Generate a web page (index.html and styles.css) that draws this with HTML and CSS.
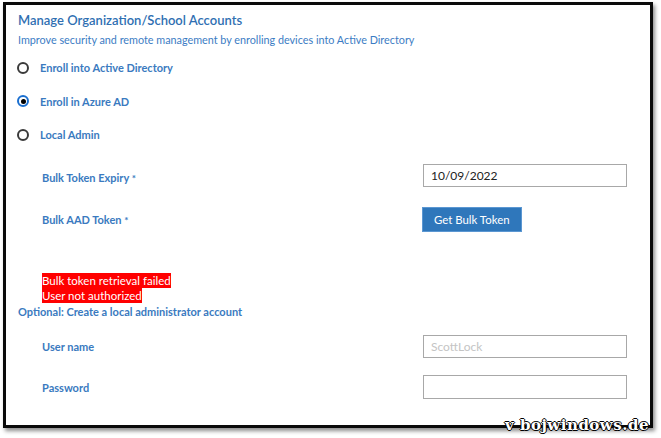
FILE: index.html
```html
<!DOCTYPE html>
<html>
<head>
<meta charset="utf-8">
<link rel="stylesheet" href="styles.css">
</head>
<body>
<div class="frame">
  <h1 class="title">Manage Organization/School Accounts</h1>
  <p class="subtitle">Improve security and remote management by enrolling devices into Active Directory</p>
  <div class="radios">
    <div class="radio-row"><span class="radio"></span><span class="radio-label">Enroll into Active Directory</span></div>
    <div class="radio-row"><span class="radio checked"></span><span class="radio-label">Enroll in Azure AD</span></div>
    <div class="radio-row"><span class="radio"></span><span class="radio-label">Local Admin</span></div>
  </div>
  <div class="field field-expiry">
    <span class="field-label">Bulk Token Expiry <span class="req">*</span></span>
    <div class="input"><span class="value">10/09/2022</span></div>
  </div>
  <div class="field field-token">
    <span class="field-label">Bulk AAD Token <span class="req">*</span></span>
    <div><button class="btn">Get Bulk Token</button></div>
  </div>
  <div class="errors">
    <span class="error">Bulk token retrieval failed</span>
    <span class="error">User not authorized</span>
  </div>
  <p class="optional">Optional: Create a local administrator account</p>
  <div class="field field-user">
    <span class="field-label">User name</span>
    <div class="input"><span class="placeholder">ScottLock</span></div>
  </div>
  <div class="field field-pass">
    <span class="field-label">Password</span>
    <div class="input"></div>
  </div>
</div>
<div class="watermark">v bojwindows.de</div>
</body>
</html>
```
FILE: styles.css
```css
html, body {
  margin: 0;
  padding: 0;
  background: #fff;
}
body {
  font-family: Lato, "Open Sans", sans-serif;
  color: #3b7cc0;
  position: relative;
  width: 661px;
  height: 438px;
  overflow: hidden;
}
.frame {
  margin: 2px 0 0 3px;
  height: 420px;
  width: 632px;
  border: 3px solid #0a0a0a;
  box-shadow: 2px 3px 4px rgba(0, 0, 0, 0.45);
  padding: 0 0 0 12px;
  box-sizing: content-box;
}
.title {
  margin: 5px 0 0 0;
  font-size: 13px;
  line-height: 20px;
  font-weight: 600;
  color: #2f6fb2;
}
.subtitle {
  margin: 2px 0 0 0;
  font-size: 10.8px;
  line-height: 16px;
  font-weight: 400;
  color: #3b7cc4;
}
.radios {
  margin-top: 3px;
}
.radio-row {
  height: 33.5px;
  display: flex;
  align-items: center;
}
.radio {
  width: 8px;
  height: 8px;
  border: 2px solid #3a3a3a;
  border-radius: 50%;
  margin-left: -1px;
  margin-right: 11px;
  display: flex;
  align-items: center;
  justify-content: center;
  flex: none;
}
.radio.checked {
  border-color: #1a6fd0;
}
.radio.checked::after {
  content: "";
  width: 5px;
  height: 5px;
  border-radius: 50%;
  background: #000;
}
.radio-label {
  font-size: 11px;
  font-weight: 700;
  color: #3a7ac0;
}
.field {
  display: grid;
  grid-template-columns: 381px 204px;
  align-items: center;
  padding-left: 24px;
}
.field-label {
  font-size: 11px;
  font-weight: 700;
  color: #3a7ac0;
}
.req {
  font-size: 10px;
}
.field-expiry {
  margin-top: 12.5px;
}
.field-expiry .field-label {
  position: relative;
  top: 2px;
}
.field-token {
  margin-top: 20px;
}
.input {
  height: 21px;
  border: 1px solid #a8a8a8;
  box-sizing: content-box;
  display: flex;
  align-items: center;
  padding-left: 7px;
  font-size: 12px;
  width: 195px;
}
.value {
  color: #222;
}
.placeholder {
  color: #c4c4c4;
}
.btn {
  height: 25px;
  padding: 0 11px;
  margin: 0 0 0 -1px;
  border: 1px solid #5b97d2;
  background: #2f77bb;
  color: #fff;
  font-family: Lato, "Open Sans", sans-serif;
  font-size: 11.4px;
}
.errors {
  margin-top: 41px;
  padding-left: 24px;
  display: flex;
  flex-direction: column;
  align-items: flex-start;
}
.error {
  background: #ff0000;
  color: #fff;
  font-size: 11.5px;
  line-height: 15px;
}
.optional {
  margin: 2px 0 0 0;
  font-size: 11px;
  line-height: 14px;
  font-weight: 700;
  color: #3a7ac0;
}
.field-user {
  margin-top: 16px;
}
.field-pass {
  margin-top: 17px;
}
.field-pass .input {
  height: 22px;
}
.watermark {
  position: absolute;
  left: 505px;
  top: 416px;
  font-family: "DejaVu Serif", serif;
  font-weight: 700;
  font-size: 15px;
  color: #fff;
  letter-spacing: 0.5px;
  text-shadow: 1px 0 0 #000, -1px 0 0 #000, 0 1px 0 #000, 0 -1px 0 #000;
}
```
